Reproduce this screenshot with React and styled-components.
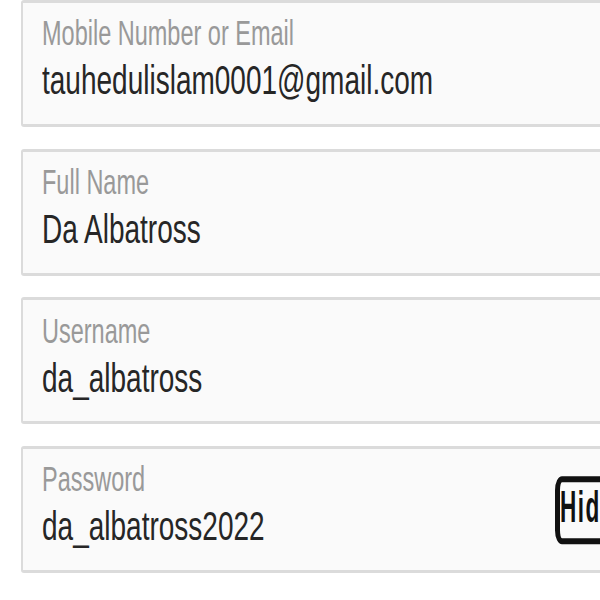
import React from 'react';
import styled, { createGlobalStyle } from "styled-components";

const GlobalStyle = createGlobalStyle`
html, body {
  margin:0;
  padding:0;
  background:#ffffff;
  overflow:hidden;
}
body {
  font-family: "Liberation Sans", Arial, sans-serif;
}
`;

const FormStack = styled.div`
display:flex;
flex-direction:column;
gap:21.67px;
padding-left:21px;
width:720px;
`;

const FieldBox = styled.div`
display:flex;
align-items:center;
height:127px;
box-sizing:border-box;
background:#fafafa;
border-style:solid;
border-color:#dbdbdb;
border-width:3px 2px;
border-radius:3px;
`;

const FieldText = styled.div`
flex:0 0 532px;
align-self:flex-start;
box-sizing:border-box;
padding:13.4px 0 0 19px;
`;

const FieldLabel = styled.div`
font-size:23.5px;
line-height:1;
color:#999999;
white-space:nowrap;
transform:scaleY(1.5);
transform-origin:0 0;
`;

const FieldValue = styled.div`
margin-top:20.5px;
font-size:28px;
line-height:1;
color:#262626;
white-space:nowrap;
transform:scaleY(1.47);
transform-origin:0 0;
`;

const ToggleButton = styled.button`
flex:none;
display:flex;
align-items:center;
height:33.5px;
box-sizing:border-box;
padding:0 6px 0 0;
margin:0;
background:transparent;
border-style:solid;
border-color:#111111;
border-width:3px 5px;
border-radius:7px;
font-family: "Liberation Sans", Arial, sans-serif;
font-weight:700;
font-size:22.6px;
letter-spacing:1.5px;
line-height:1;
color:#111111;
transform:scaleY(2);
transform-origin:50% 50%;
`;

const fields = [
  { label: 'Mobile Number or Email', value: 'tauhedulislam0001@gmail.com' },
  { label: 'Full Name', value: 'Da Albatross' },
  { label: 'Username', value: 'da_albatross' },
  { label: 'Password', value: 'da_albatross2022', toggle: 'Hide' },
];

export default function App() {
  return (
    <>
      <GlobalStyle />
      <FormStack>
        {fields.map((f) => (
          <FieldBox key={f.label}>
            <FieldText>
              <FieldLabel>{f.label}</FieldLabel>
              <FieldValue>{f.value}</FieldValue>
            </FieldText>
            {f.toggle && <ToggleButton type="button">{f.toggle}</ToggleButton>}
          </FieldBox>
        ))}
      </FormStack>
    </>
  );
}
